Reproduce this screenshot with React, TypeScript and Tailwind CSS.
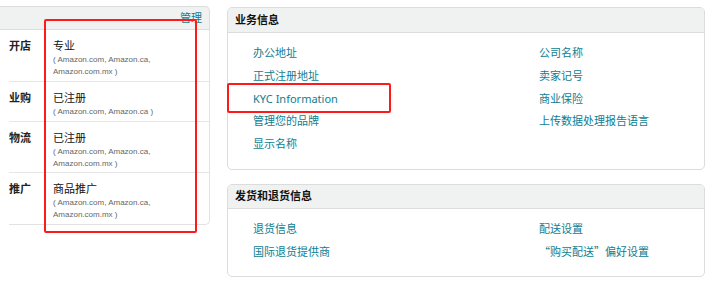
import React from "react";

const font = { fontFamily: '"Noto Sans", "Noto Sans CJK SC", sans-serif' };
const cjk = { fontFamily: '"Noto Sans CJK SC", sans-serif' };
const sub = { fontFamily: '"Liberation Sans", "Noto Sans CJK SC", sans-serif' };

const rows = [
  { label: "开店", value: "专业", sub: ["( Amazon.com, Amazon.ca,", "Amazon.com.mx )"], h: "h-[52px]" },
  { label: "业购", value: "已注册", sub: ["( Amazon.com, Amazon.ca )"], h: "h-[40px]" },
  { label: "物流", value: "已注册", sub: ["( Amazon.com, Amazon.ca,", "Amazon.com.mx )"], h: "h-[51px]" },
  { label: "推广", value: "商品推广", sub: ["( Amazon.com, Amazon.ca,", "Amazon.com.mx )"], h: "h-[51px]" },
];

export default function App() {
  return (
    <div className="relative w-[727px] h-[290px] bg-white overflow-hidden text-[11px]" style={font}>
      <div className="flex pt-[6px]">
        {/* Left panel */}
        <div className="w-[210px] shrink-0">
          <div className="h-[24px] bg-[#f0f1f1] border-t border-r border-[#dcdcdc] rounded-tr-[5px] flex items-center justify-end pr-[7px] border-b">
            <span className="text-[#0e7d90] text-[11px]">管理</span>
          </div>
          <div className="ml-[9px] border-r border-b border-[#e2e2e2] rounded-br-[5px]">
            {rows.map((r, i) => (
              <div key={i} className={`${r.h} flex ${i < rows.length - 1 ? "border-b border-[#e6e6e6]" : ""}`}>
                <div className="w-[44px] pt-[9px] font-bold text-[#222] text-[11px] leading-[14px]">{r.label}</div>
                <div className="pt-[9px]">
                  <div className="text-[#111] text-[11px] leading-[14px]">{r.value}</div>
                  <div className="mt-[1px] text-[#666] text-[8px] leading-[11.5px]" style={sub}>
                    {r.sub.map((s, j) => (
                      <div key={j}>{s}</div>
                    ))}
                  </div>
                </div>
              </div>
            ))}
          </div>
        </div>

        {/* Right column */}
        <div className="ml-[17px] mt-[1px] w-[478px] flex flex-col gap-[14px]">
          <div className="border border-[#dcdcdc] rounded-[5px] overflow-hidden h-[163px]">
            <div className="h-[25px] bg-[#f0f1f1] border-b border-[#dcdcdc] flex items-center pl-[7px] font-bold text-[#111] text-[11px]">
              业务信息
            </div>
            <div className="grid grid-cols-[286px_1fr] pl-[25px] pt-[9px] leading-[22.75px] text-[#0e7d90] text-[11px]">
              <div>办公地址</div>
              <div>公司名称</div>
              <div>正式注册地址</div>
              <div>卖家记号</div>
              <div>KYC Information</div>
              <div>商业保险</div>
              <div>管理您的品牌</div>
              <div>上传数据处理报告语言</div>
              <div>显示名称</div>
              <div></div>
            </div>
          </div>
          <div className="border border-[#dcdcdc] rounded-[5px] overflow-hidden h-[93px]">
            <div className="h-[24px] bg-[#f0f1f1] border-b border-[#dcdcdc] flex items-center pl-[7px] font-bold text-[#111] text-[11px]">
              发货和退货信息
            </div>
            <div className="grid grid-cols-[286px_1fr] pl-[25px] pt-[8px] leading-[23px] text-[#0e7d90] text-[11px]">
              <div>退货信息</div>
              <div>配送设置</div>
              <div>国际退货提供商</div>
              <div style={cjk}>“购买配送”偏好设置</div>
            </div>
          </div>
        </div>
      </div>

      {/* Red highlight boxes */}
      <div className="absolute left-[44px] top-[19px] w-[153px] h-[214px] border-2 border-[#ff1a1a] rounded-[2px]" />
      <div className="absolute left-[227px] top-[83px] w-[164px] h-[30px] border-2 border-[#ff1a1a] rounded-[2px]" />
    </div>
  );
}
